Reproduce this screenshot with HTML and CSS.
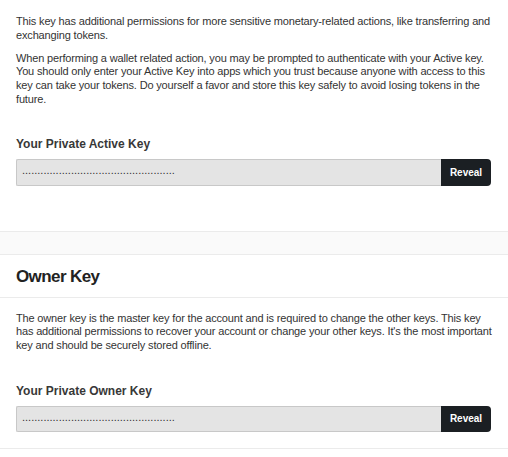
FILE: index.html
```html
<!DOCTYPE html>
<html>
<head>
<meta charset="utf-8">
<link rel="stylesheet" href="styles.css">
</head>
<body>
<section class="card">
  <p class="text">This key has additional permissions for more sensitive monetary-related actions, like transferring and exchanging tokens.</p>
  <p class="text">When performing a wallet related action, you may be prompted to authenticate with your Active key. You should only enter your Active Key into apps which you trust because anyone with access to this key can take your tokens. Do yourself a favor and store this key safely to avoid losing tokens in the future.</p>
  <div class="field field-active">
    <div class="label">Your Private Active Key</div>
    <div class="key-row">
      <div class="key-input">..................................................</div>
      <button class="reveal">Reveal</button>
    </div>
  </div>
</section>
<div class="band"></div>
<section class="card card-head">
  <h2 class="heading">Owner Key</h2>
</section>
<section class="card card-body">
  <p class="text">The owner key is the master key for the account and is required to change the other keys. This key has additional permissions to recover your account or change your other keys. It's the most important key and should be securely stored offline.</p>
  <div class="field field-owner">
    <div class="label">Your Private Owner Key</div>
    <div class="key-row">
      <div class="key-input">..................................................</div>
      <button class="reveal">Reveal</button>
    </div>
  </div>
</section>
</body>
</html>
```
FILE: styles.css
```css
html, body {
  margin: 0;
  padding: 0;
  background: #ffffff;
}
body {
  font-family: "Liberation Sans", Arial, sans-serif;
  font-size: 11px;
  color: #333333;
}
.card {
  padding: 15px 16px 0 16px;
}
.text {
  margin: 0 0 9px 0;
  line-height: 13.75px;
  letter-spacing: -0.16px;
  color: #333333;
}
.field-active {
  padding-top: 21px;
  padding-bottom: 45px;
}
.label {
  font-size: 12px;
  font-weight: bold;
  line-height: 15px;
  color: #383838;
  margin-bottom: 7px;
}
.key-row {
  display: flex;
  margin-right: 1px;
}
.key-input {
  flex: 1;
  height: 25px;
  line-height: 20px;
  background: #e4e4e4;
  border: 1px solid #c8c8c8;
  border-right: none;
  border-radius: 2px 0 0 2px;
  padding-left: 5px;
  font-size: 11px;
  color: #333;
  overflow: hidden;
  white-space: nowrap;
  box-sizing: content-box;
}
.reveal {
  width: 50px;
  height: 27px;
  border: none;
  background: #1b1f23;
  color: #ffffff;
  font-family: "Liberation Sans", Arial, sans-serif;
  font-size: 10px;
  font-weight: bold;
  border-radius: 0 4px 4px 0;
  padding: 0;
}
.band {
  height: 22px;
  background: #fafafa;
  border-top: 1px solid #ebebeb;
  border-bottom: 1px solid #ebebeb;
}
.card-head {
  padding-top: 11px;
  border-bottom: 1px solid #ebebeb;
}
.heading {
  margin: 0;
  padding: 0 0 10px 0;
  font-size: 17px;
  letter-spacing: -0.6px;
  line-height: 21px;
  font-weight: bold;
  color: #222;
}
.card-body {
  padding-top: 14px;
  padding-bottom: 16px;
  border-bottom: 1px solid #ebebeb;
}
.field-owner {
  padding-top: 22px;
}
.field-owner .key-input {
  height: 24px;
}
.field-owner .reveal {
  height: 26px;
}
```
